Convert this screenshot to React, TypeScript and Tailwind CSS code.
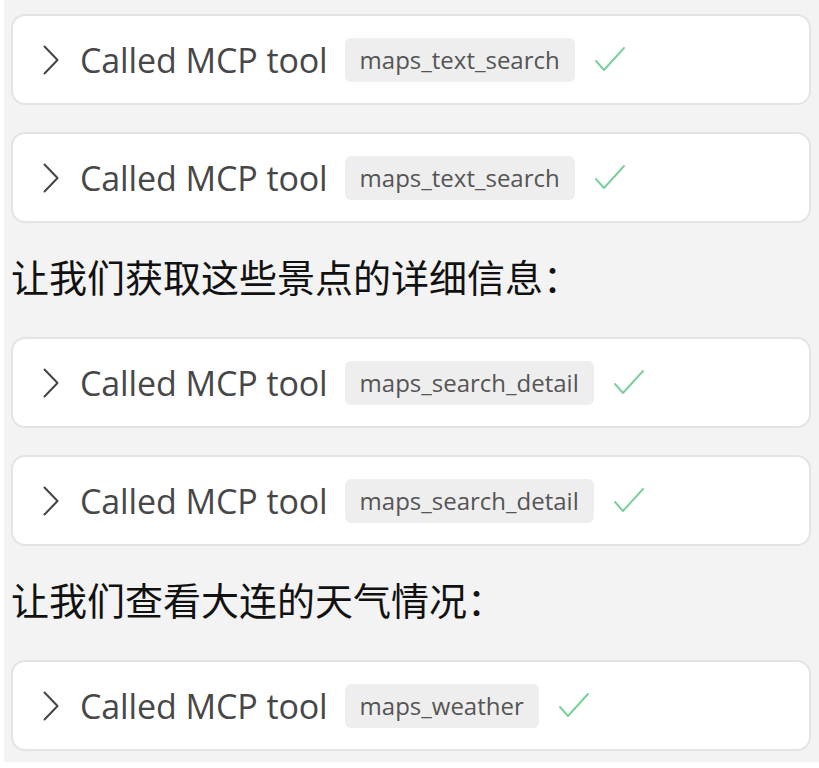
import React from "react";

type Item =
  | { kind: "tool"; name: string }
  | { kind: "text"; text: string };

const items: Item[] = [
  { kind: "tool", name: "maps_text_search" },
  { kind: "tool", name: "maps_text_search" },
  { kind: "text", text: "让我们获取这些景点的详细信息：" },
  { kind: "tool", name: "maps_search_detail" },
  { kind: "tool", name: "maps_search_detail" },
  { kind: "text", text: "让我们查看大连的天气情况：" },
  { kind: "tool", name: "maps_weather" },
];

function Chevron() {
  return (
    <svg width="16" height="30" viewBox="0 0 16 30" fill="none" className="shrink-0">
      <path d="M1.5 1.5 14.5 15 1.5 28.5" stroke="#444" strokeWidth="2" strokeLinecap="round" strokeLinejoin="round" />
    </svg>
  );
}

function Check() {
  return (
    <svg width="32" height="28" viewBox="0 0 32 28" fill="none" className="shrink-0">
      <path d="M2 15 10 24 30 2" stroke="#7dcf9c" strokeWidth="2" strokeLinecap="round" strokeLinejoin="round" />
    </svg>
  );
}

function ToolCard({ name }: { name: string }) {
  return (
    <div className="h-[91px] rounded-[14px] border-2 border-[#e4e4e4] bg-white flex items-center pl-[30px]">
      <Chevron />
      <span className="ml-[21px] text-[34px] leading-none text-[#474747] font-['Open_Sans',sans-serif] tracking-[-0.1px]">
        Called MCP tool
      </span>
      <span className="ml-[17px] h-[44px] px-[15px] rounded-[6px] bg-[#eeeeee] flex items-center text-[24px] text-[#555] font-['Open_Sans',sans-serif]">
        {name}
      </span>
      <span className="ml-[19px] flex items-center">
        <Check />
      </span>
    </div>
  );
}

export default function App() {
  return (
    <div className="min-h-screen bg-white">
      <div className="ml-[4px] bg-[#f3f3f3] pt-[14px] pb-[11px] pl-[7px] pr-[8px] flex flex-col gap-[27px]">
        {items.map((item, i) =>
          item.kind === "tool" ? (
            <ToolCard key={i} name={item.name} />
          ) : (
            <div
              key={i}
              className="h-[60px] flex items-center pb-[8px] text-[38px] leading-none text-[#111] font-['Noto_Sans_CJK_SC','Noto_Sans',sans-serif]"
            >
              {item.text}
            </div>
          )
        )}
      </div>
    </div>
  );
}
